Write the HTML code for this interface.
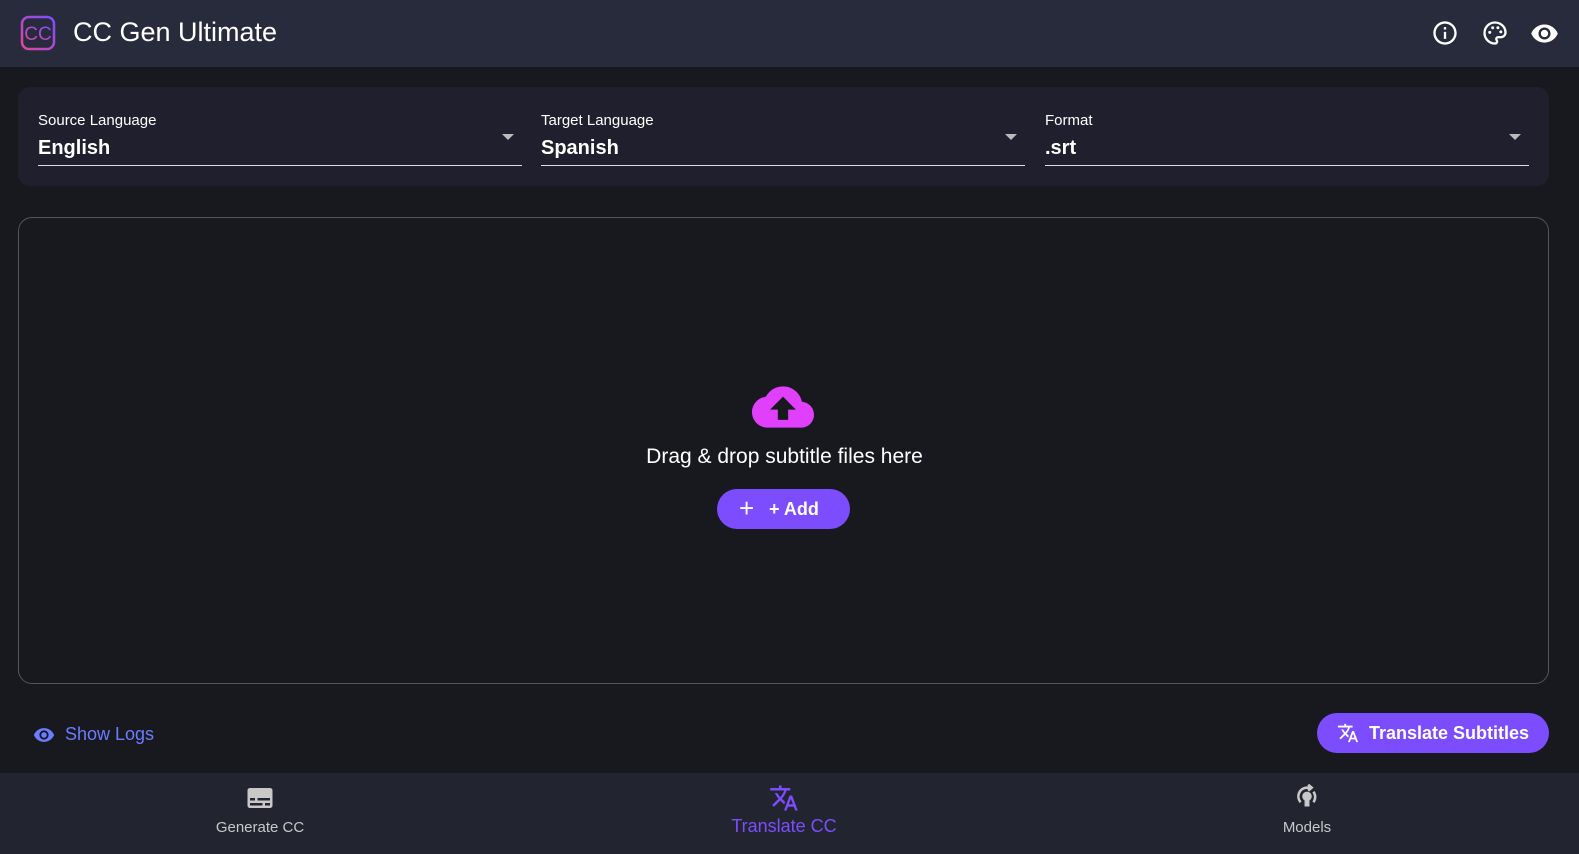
<!DOCTYPE html>
<html><head><meta charset="utf-8"><style>
*{margin:0;padding:0;box-sizing:border-box}
body{width:1579px;height:854px;background:#18191f;font-family:"Liberation Sans",sans-serif;color:#fff;position:relative;overflow:hidden}
.hdr{position:absolute;left:0;top:0;width:1579px;height:67px;background:#272b3c}
.title{position:absolute;left:73px;top:17px;font-size:27px;color:#fff}
.panel{position:absolute;left:18px;top:87px;width:1531px;height:99px;background:#1f1f2e;border-radius:12px}
.fld{position:absolute;top:0;width:484px}
.fld .l{position:absolute;top:25px;font-size:15px;color:#fff}
.fld .v{position:absolute;top:50px;font-size:20px;font-weight:bold}
.fld .u{position:absolute;top:78px;left:0;width:484px;height:1px;background:#ddd}
.fld .a{position:absolute;right:8px;top:47px;width:0;height:0;border-left:6px solid transparent;border-right:6px solid transparent;border-top:6px solid #bbb}
.drop{position:absolute;left:18px;top:217px;width:1531px;height:467px;border:1px solid #555;border-radius:14px}
.btn{position:absolute;background:#7c4dff;border-radius:20px;color:#fff;font-weight:bold}
.nav{position:absolute;left:0;top:773px;width:1579px;height:81px;background:#22252f}
.ni{position:absolute;top:0;width:200px;text-align:center;font-size:15px;color:#c8c8c8}
</style></head><body>
<div class="hdr">
<svg style="position:absolute;left:20px;top:15px" width="36" height="36" viewBox="0 0 36 36"><defs><linearGradient id="g" x1="0" y1="1" x2="1" y2="0"><stop offset="0" stop-color="#e0489c"/><stop offset="1" stop-color="#7c4dff"/></linearGradient></defs><rect x="2" y="2" width="32" height="32" rx="7" fill="none" stroke="url(#g)" stroke-width="2.5"/><text x="18" y="25" text-anchor="middle" font-family="Liberation Sans" font-size="19" fill="url(#g)">CC</text></svg>
<div class="title">CC Gen Ultimate</div>
<svg style="position:absolute;left:1431px;top:19px" width="28" height="28" viewBox="0 0 24 24" fill="#fff"><path d="M11 7h2v2h-2zm0 4h2v6h-2zm1-9C6.48 2 2 6.48 2 12s4.48 10 10 10 10-4.48 10-10S17.52 2 12 2zm0 18c-4.41 0-8-3.590-8-8s3.59-8 8-8 8 3.59 8 8-3.59 8-8 8z"/></svg>
<svg style="position:absolute;left:1481px;top:19px" width="28" height="28" viewBox="0 0 24 24" fill="none" stroke="#fff" stroke-width="2"><path d="M12 3a9 9 0 0 0 0 18c1.2 0 1.8-.8 1.8-1.7 0-.9-.7-1.3-.7-2.1 0-.9.7-1.6 1.6-1.6H17a4 4 0 0 0 4-4c0-4.7-4-8.6-9-8.6z"/><circle cx="7.5" cy="11.5" r="1.3" fill="#fff" stroke="none"/><circle cx="10" cy="7.5" r="1.3" fill="#fff" stroke="none"/><circle cx="14.5" cy="7.5" r="1.3" fill="#fff" stroke="none"/><circle cx="17" cy="11" r="1.3" fill="#fff" stroke="none"/></svg>
<svg style="position:absolute;left:1530px;top:19px" width="29" height="29" viewBox="0 0 24 24" fill="#fff"><path d="M12 4.5C7 4.5 2.73 7.61 1 12c1.73 4.39 6 7.5 11 7.5s9.27-3.11 11-7.5c-1.730-4.39-6-7.5-11-7.5zM12 17c-2.76 0-5-2.24-5-5s2.24-5 5-5 5 2.24 5 5-2.24 5-5 5zm0-8c-1.66 0-3 1.34-3 3s1.34 3 3 3 3-1.34 3-3-1.34-3-3-3z"/></svg>
</div>
<div class="panel">
<div class="fld" style="left:20px"><div class="l">Source Language</div><div class="v">English</div><div class="a"></div><div class="u"></div></div>
<div class="fld" style="left:523px"><div class="l">Target Language</div><div class="v">Spanish</div><div class="a"></div><div class="u"></div></div>
<div class="fld" style="left:1027px"><div class="l">Format</div><div class="v">.srt</div><div class="a"></div><div class="u"></div></div>
</div>
<div class="drop">
<svg style="position:absolute;left:733px;top:158px" width="62" height="62" viewBox="0 0 24 24" fill="#e040fb"><path d="M19.35 10.04C18.67 6.59 15.64 4 12 4 9.11 4 6.6 5.64 5.35 8.04 2.34 8.36 0 10.91 0 14c0 3.31 2.69 6 6 6h13c2.76 0 5-2.24 5-5 0-2.64-2.05-4.78-4.65-4.96zM14 13v4h-4v-4H7l5-5 5 5h-3z"/></svg>
<div style="position:absolute;left:0;width:1531px;top:227px;text-align:center;font-size:21px">Drag &amp; drop subtitle files here</div>
<div class="btn" style="left:698px;top:271px;width:133px;height:40px;font-size:18px;line-height:40px"><span style="position:absolute;left:22px;font-size:26px;font-weight:normal;top:-1px">+</span><span style="position:absolute;left:52px">+ Add</span></div>
</div>
<svg style="position:absolute;left:33px;top:724px" width="22" height="22" viewBox="0 0 24 24" fill="#6b7cff"><path d="M12 4.5C7 4.5 2.73 7.61 1 12c1.73 4.39 6 7.5 11 7.5s9.27-3.11 11-7.5c-1.73-4.39-6-7.5-11-7.5zM12 17c-2.76 0-5-2.24-5-5s2.24-5 5-5 5 2.24 5 5-2.24 5-5 5zm0-8c-1.66 0-3 1.34-3 3s1.34 3 3 3 3-1.34 3-3-1.34-3-3-3z"/></svg>
<div style="position:absolute;left:65px;top:724px;font-size:18px;color:#6b7cff">Show Logs</div>
<div class="btn" style="left:1317px;top:713px;width:232px;height:40px;font-size:18px;line-height:40px">
<svg style="position:absolute;left:20px;top:9px" width="22" height="22" viewBox="0 0 24 24" fill="#fff"><path d="M12.87 15.07l-2.54-2.51.03-.03c1.74-1.94 2.98-4.17 3.71-6.53H17V4h-7V2H8v2H1v1.99h11.17C11.5 7.92 10.44 9.75 9 11.35 8.07 10.32 7.3 9.19 6.69 8h-2c.73 1.63 1.73 3.17 2.98 4.56l-5.09 5.02L4 19l5-5 3.11 3.11.76-2.04zM18.5 10h-2L12 22h2l1.12-3h4.75L21 22h2l-4.5-12zm-2.62 7l1.62-4.33L19.12 17h-3.24z"/></svg>
<span style="position:absolute;left:52px">Translate Subtitles</span></div>
<div class="nav">
<div class="ni" style="left:160px"><svg style="position:absolute;left:85px;top:10px" width="30" height="30" viewBox="0 0 24 24" fill="#c8c8c8"><path d="M20 4H4c-1.1 0-2 .9-2 2v12c0 1.1.9 2 2 2h16c1.1 0 2-.9 2-2V6c0-1.1-.9-2-2-2zM4 12h4v2H4v-2zm10 6H4v-2h10v2zm6 0h-4v-2h4v2zm0-4H10v-2h10v2z"/></svg><div style="position:absolute;top:46px;width:200px">Generate CC</div></div>
<div class="ni" style="left:684px;color:#7c4dff"><svg style="position:absolute;left:85px;top:10px" width="30" height="30" viewBox="0 0 24 24" fill="#7c4dff"><path d="M12.87 15.07l-2.54-2.51.03-.03c1.74-1.94 2.98-4.17 3.71-6.53H17V4h-7V2H8v2H1v1.99h11.17C11.5 7.92 10.44 9.75 9 11.35 8.07 10.32 7.3 9.19 6.69 8h-2c.73 1.63 1.73 3.17 2.98 4.56l-5.09 5.02L4 19l5-5 3.11 3.11.76-2.04zM18.5 10h-2L12 22h2l1.12-3h4.75L21 22h2l-4.5-12zm-2.62 7l1.62-4.33L19.12 17h-3.24z"/></svg><div style="position:absolute;top:43px;width:200px;font-size:18px">Translate CC</div></div>
<div class="ni" style="left:1207px"><svg style="position:absolute;left:86px;top:10px" width="28" height="28" viewBox="0 0 24 24" fill="none" stroke="#c8c8c8" stroke-width="2.2"><path d="M6.5 16.5A7.5 7.5 0 0 1 12 4h3"/><path d="M13 1.5l3 2.5-3 2.5" fill="#c8c8c8"/><path d="M17.5 7.5a7.5 7.5 0 0 1 0 9"/><circle cx="12" cy="11.5" r="3" fill="#c8c8c8"/><path d="M11 15v4h2v-4"/></svg><div style="position:absolute;top:46px;width:200px">Models</div></div>
</div>
</body></html>
